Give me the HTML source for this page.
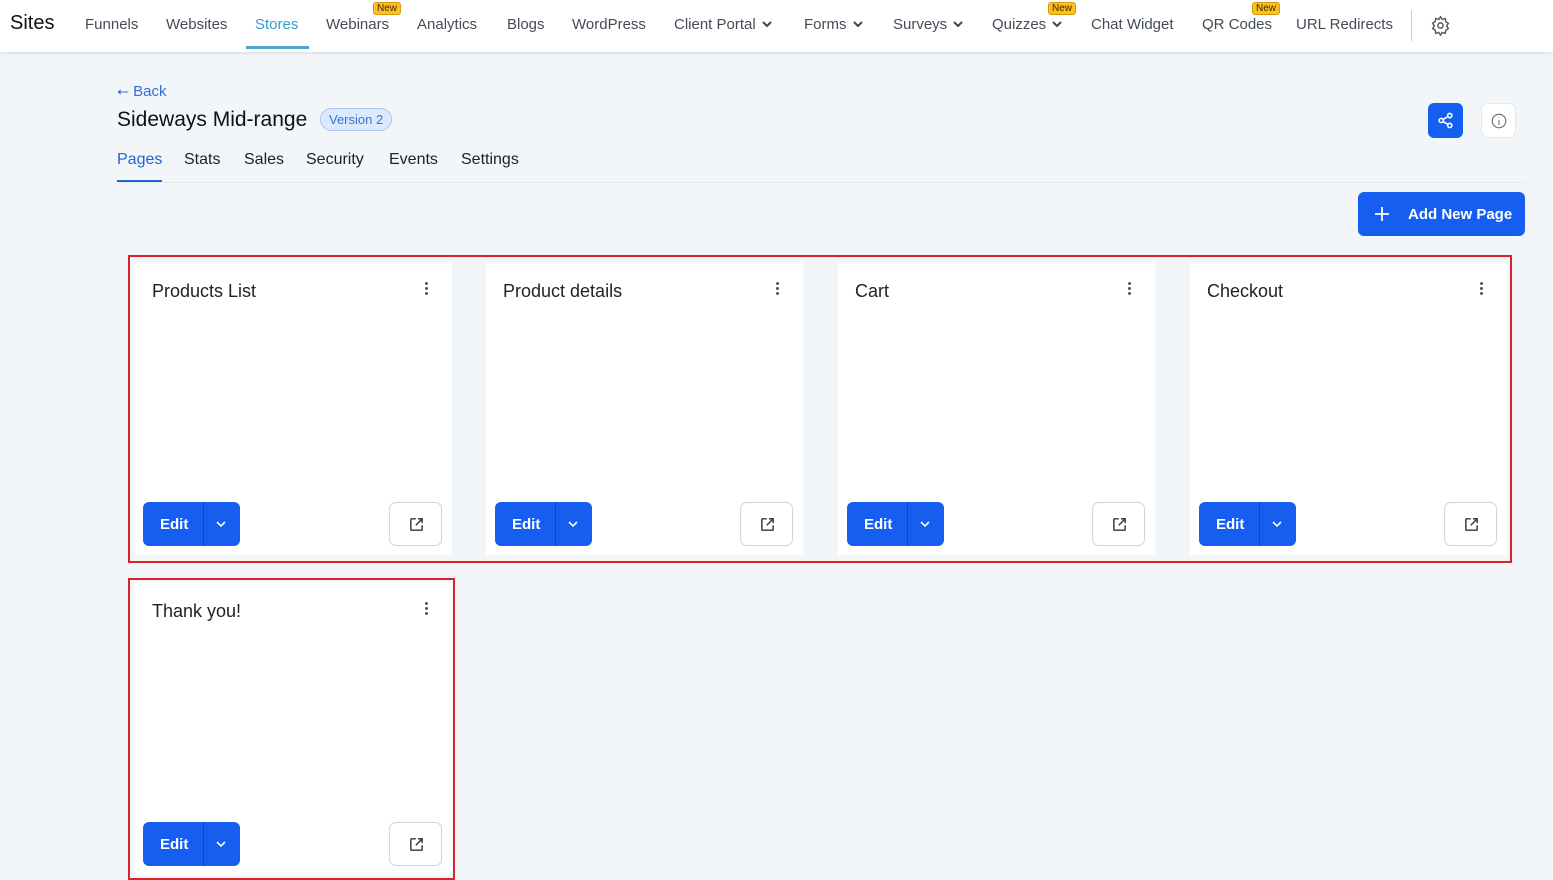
<!DOCTYPE html>
<html><head><style>
*{box-sizing:border-box;margin:0;padding:0}
body{width:1553px;height:878px;overflow:hidden;background:#f2f6f9;font-family:"Liberation Sans",Arial,sans-serif;position:relative}
.top{position:absolute;left:0;top:0;width:1553px;height:52px;background:#fff;box-shadow:0 1px 3px rgba(0,0,0,.12)}
.t{position:absolute;top:16px;font-size:15px;color:#444c58}
.t svg{margin-left:6px;vertical-align:1px}
.new{position:absolute;top:2px;background:#fbbf24;border:1px solid #d99a06;border-radius:3px;font-size:10px;color:#3b2a00;padding:0 3px;line-height:11px}
.card{position:absolute;background:#fff;width:317px;height:293px}
.card h3{position:absolute;left:17px;top:19px;font-weight:400;font-size:18px;color:#222}
.dots{position:absolute;right:24px;top:20px;width:3px}
.dots i{display:block;width:3px;height:3px;border-radius:50%;background:#555;margin-bottom:2px}
.edit{position:absolute;left:8px;bottom:9px;width:97px;height:44px;background:#155eef;border-radius:6px;color:#fff;font-weight:700;font-size:15px}
.edit span{position:absolute;left:17px;top:14px}
.edit b{position:absolute;left:60px;top:0;width:1px;height:44px;background:#0b48c9}
.edit svg{position:absolute;left:72px;top:16px}
.ext{position:absolute;right:10px;bottom:9px;width:53px;height:44px;border:1px solid #d1d5db;border-radius:7px;background:#fff}
.ext svg{position:absolute;left:18px;top:13px}
.red{position:absolute;border:2px solid #d9232b}
</style></head><body>
<div class="top">
<div class="t" style="left:10px;top:12px;font-size:20px;color:#111">Sites</div>
<div class="t" style="left:85px">Funnels</div>
<div class="t" style="left:166px">Websites</div>
<div class="t" style="left:255px;color:#3b9bd1">Stores</div>
<div style="position:absolute;left:246px;top:46px;width:63px;height:3px;background:#4fa3c9"></div>
<div class="new" style="left:373px">New</div>
<div class="t" style="left:326px">Webinars</div>
<div class="t" style="left:417px">Analytics</div>
<div class="t" style="left:507px">Blogs</div>
<div class="t" style="left:572px">WordPress</div>
<div class="t" style="left:674px">Client Portal<svg width="10" height="7" viewBox="0 0 10 7" fill="none" stroke="#444" stroke-width="2"><path d="M1 1l4 4 4-4"/></svg></div>
<div class="t" style="left:804px">Forms<svg width="10" height="7" viewBox="0 0 10 7" fill="none" stroke="#444" stroke-width="2"><path d="M1 1l4 4 4-4"/></svg></div>
<div class="t" style="left:893px">Surveys<svg width="10" height="7" viewBox="0 0 10 7" fill="none" stroke="#444" stroke-width="2"><path d="M1 1l4 4 4-4"/></svg></div>
<div class="new" style="left:1048px">New</div>
<div class="t" style="left:992px">Quizzes<svg width="10" height="7" viewBox="0 0 10 7" fill="none" stroke="#444" stroke-width="2"><path d="M1 1l4 4 4-4"/></svg></div>
<div class="t" style="left:1091px">Chat Widget</div>
<div class="new" style="left:1252px">New</div>
<div class="t" style="left:1202px">QR Codes</div>
<div class="t" style="left:1296px">URL Redirects</div>
<div style="position:absolute;left:1411px;top:10px;width:1px;height:31px;background:#ccc"></div>
<svg style="position:absolute;left:1430px;top:15px" width="21" height="21" viewBox="0 0 24 24" fill="none" stroke="#555" stroke-width="1.6"><circle cx="12" cy="12" r="3"/><path d="M12 2l2 3 3.5-1 .5 3.5 3 2-2 3 2 3-3 2-.5 3.5-3.5-1-2 3-2-3-3.5 1-.5-3.5-3-2 2-3-2-3 3-2 .5-3.5 3.5 1z"/></svg>
</div>
<div style="position:absolute;left:117px;top:83px;font-size:15px;color:#2f6fd6">⭠ Back</div>
<div style="position:absolute;left:117px;top:108px;font-size:21px;color:#111">Sideways Mid-range</div>
<div style="position:absolute;left:320px;top:108px;height:23px;padding:0 8px;border:1px solid #a9c8ef;background:#dbeafe;border-radius:12px;font-size:13px;line-height:21px;color:#3a74c9">Version 2</div>
<div style="position:absolute;left:117px;top:151px;font-size:16px;color:#2563d6">Pages</div>
<div style="position:absolute;left:117px;top:180px;width:45px;height:3px;background:#2563d6"></div>
<div style="position:absolute;left:184px;top:151px;font-size:16px;color:#222">Stats</div>
<div style="position:absolute;left:244px;top:151px;font-size:16px;color:#222">Sales</div>
<div style="position:absolute;left:306px;top:151px;font-size:16px;color:#222">Security</div>
<div style="position:absolute;left:389px;top:151px;font-size:16px;color:#222">Events</div>
<div style="position:absolute;left:461px;top:151px;font-size:16px;color:#222">Settings</div>
<div style="position:absolute;left:117px;top:182px;width:1408px;height:1px;background:#e5e9ed"></div>
<div style="position:absolute;left:1428px;top:103px;width:35px;height:35px;background:#155eef;border-radius:6px"><svg style="position:absolute;left:9px;top:9px" width="17" height="17" viewBox="0 0 24 24" fill="none" stroke="#fff" stroke-width="2.2"><circle cx="18" cy="5" r="3"/><circle cx="6" cy="12" r="3"/><circle cx="18" cy="19" r="3"/><path d="M8.6 13.5l6.8 4M15.4 6.5l-6.8 4"/></svg></div>
<div style="position:absolute;left:1481px;top:103px;width:35px;height:35px;background:#fff;border:1px solid #e3e7eb;border-radius:7px"><svg style="position:absolute;left:8px;top:8px" width="18" height="18" viewBox="0 0 24 24" fill="none" stroke="#777" stroke-width="1.6"><circle cx="12" cy="12" r="9"/><path d="M12 11v6M12 7.5v.5"/></svg></div>
<div style="position:absolute;left:1358px;top:192px;width:167px;height:44px;background:#155eef;border-radius:6px;color:#fff;font-weight:700;font-size:15px"><svg style="position:absolute;left:17px;top:15px" width="14" height="14" viewBox="0 0 14 14" stroke="#fff" stroke-width="1.8"><path d="M7 0v14M0 7h14"/></svg><span style="position:absolute;left:50px;top:14px">Add New Page</span></div>

<div class="red" style="left:128px;top:255px;width:1384px;height:308px"></div>
<div class="red" style="left:128px;top:578px;width:327px;height:302px"></div>

<div class="card" style="left:135px;top:262px"><h3>Products List</h3><div class="dots"><i></i><i></i><i></i></div><div class="edit"><span>Edit</span><b></b><svg width="12" height="12" viewBox="0 0 12 12" fill="none" stroke="#fff" stroke-width="1.6"><path d="M2 4l4 4 4-4"/></svg></div><div class="ext"><svg width="17" height="17" viewBox="0 0 24 24" fill="none" stroke="#333" stroke-width="2"><path d="M11 4H5a1 1 0 00-1 1v14a1 1 0 001 1h14a1 1 0 001-1v-6M14 4h6v6M20 4l-9 9"/></svg></div></div>
<div class="card" style="left:486px;top:262px"><h3>Product details</h3><div class="dots"><i></i><i></i><i></i></div><div class="edit" style="left:9px"><span>Edit</span><b></b><svg width="12" height="12" viewBox="0 0 12 12" fill="none" stroke="#fff" stroke-width="1.6"><path d="M2 4l4 4 4-4"/></svg></div><div class="ext"><svg width="17" height="17" viewBox="0 0 24 24" fill="none" stroke="#333" stroke-width="2"><path d="M11 4H5a1 1 0 00-1 1v14a1 1 0 001 1h14a1 1 0 001-1v-6M14 4h6v6M20 4l-9 9"/></svg></div></div>
<div class="card" style="left:838px;top:262px"><h3>Cart</h3><div class="dots"><i></i><i></i><i></i></div><div class="edit" style="left:9px"><span>Edit</span><b></b><svg width="12" height="12" viewBox="0 0 12 12" fill="none" stroke="#fff" stroke-width="1.6"><path d="M2 4l4 4 4-4"/></svg></div><div class="ext"><svg width="17" height="17" viewBox="0 0 24 24" fill="none" stroke="#333" stroke-width="2"><path d="M11 4H5a1 1 0 00-1 1v14a1 1 0 001 1h14a1 1 0 001-1v-6M14 4h6v6M20 4l-9 9"/></svg></div></div>
<div class="card" style="left:1190px;top:262px"><h3>Checkout</h3><div class="dots"><i></i><i></i><i></i></div><div class="edit" style="left:9px"><span>Edit</span><b></b><svg width="12" height="12" viewBox="0 0 12 12" fill="none" stroke="#fff" stroke-width="1.6"><path d="M2 4l4 4 4-4"/></svg></div><div class="ext"><svg width="17" height="17" viewBox="0 0 24 24" fill="none" stroke="#333" stroke-width="2"><path d="M11 4H5a1 1 0 00-1 1v14a1 1 0 001 1h14a1 1 0 001-1v-6M14 4h6v6M20 4l-9 9"/></svg></div></div>
<div class="card" style="left:135px;top:582px"><h3>Thank you!</h3><div class="dots"><i></i><i></i><i></i></div><div class="edit"><span>Edit</span><b></b><svg width="12" height="12" viewBox="0 0 12 12" fill="none" stroke="#fff" stroke-width="1.6"><path d="M2 4l4 4 4-4"/></svg></div><div class="ext"><svg width="17" height="17" viewBox="0 0 24 24" fill="none" stroke="#333" stroke-width="2"><path d="M11 4H5a1 1 0 00-1 1v14a1 1 0 001 1h14a1 1 0 001-1v-6M14 4h6v6M20 4l-9 9"/></svg></div></div>
</body></html>
